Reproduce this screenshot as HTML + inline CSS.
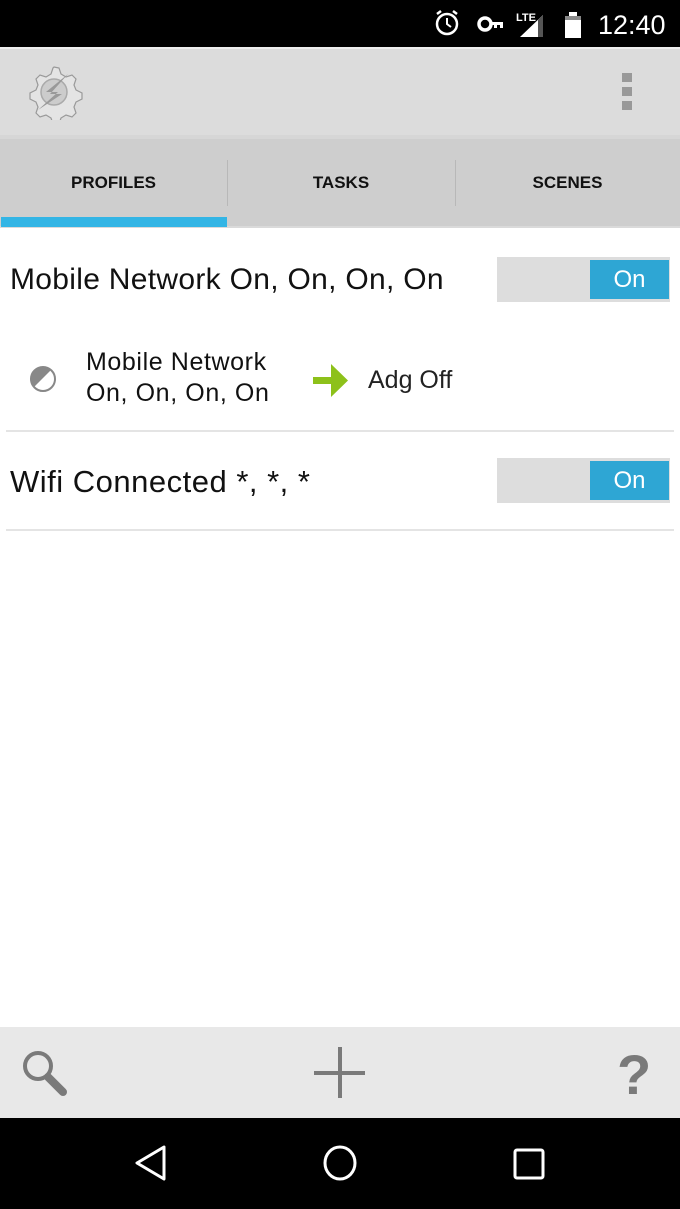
<!DOCTYPE html>
<html><head><meta charset="utf-8"><style>
*{margin:0;padding:0;box-sizing:border-box}
body{width:680px;height:1209px;position:relative;background:#fff;font-family:"Liberation Sans",sans-serif;overflow:hidden}
.a{position:absolute}
.t{white-space:nowrap}
</style></head><body>
<div class="a" style="left:0;top:0;width:680px;height:47px;background:#000"></div>
<svg class="a" style="left:430px;top:6px" width="250" height="36" viewBox="0 0 250 36">
<circle cx="17" cy="18" r="10" fill="none" stroke="#fff" stroke-width="2.5"/>
<path d="M17 12v6l4 3" stroke="#fff" stroke-width="2" fill="none"/>
<path d="M7 8l4-3M27 8l-4-3" stroke="#fff" stroke-width="2.5"/>
<circle cx="55" cy="18" r="6" fill="none" stroke="#fff" stroke-width="3.5"/>
<path d="M60 16h13v6h-3v-3h-3v3h-3v-3h-4z" fill="#fff"/>
<text x="86" y="15" fill="#fff" font-size="11" font-family="Liberation Sans Narrow,Liberation Sans" font-weight="bold">LTE</text>
<path d="M90 31L113 9v22z" fill="#fff"/><path d="M108 14l5-5v22h-5z" fill="#555"/>
<rect x="135" y="10" width="16" height="22" fill="#fff"/><rect x="139" y="6" width="8" height="5" fill="#fff"/><rect x="135" y="10" width="16" height="4" fill="#888"/>
<text x="168" y="28" fill="#fff" font-size="27">12:40</text>
</svg>
<div class="a" style="left:0;top:47px;width:680px;height:88px;background:#dcdcdc;border-top:2px solid #eee"></div>
<svg class="a" style="left:24px;top:64px" width="60" height="56" viewBox="0 0 60 56">
<path d="M30 3l5 1 2 6 5 3 6-2 4 4-2 6 2 5 6 3v6l-6 3-2 5 2 6-4 4-6-2-5 3-2 6h-6l-2-6-5-3-6 2-4-4 2-6-2-5-6-3v-6l6-3 2-5-2-6 4-4 6 2 5-3 2-6z" fill="#e4e4e4" stroke="#999" stroke-width="1.2"/>
<circle cx="30" cy="28" r="13" fill="#ccc" stroke="#aaa" stroke-width="1.5"/>
<path d="M44 10L22 28h12L14 46 38 30H26z" fill="#999"/>
</svg>
<div class="a" style="left:622px;top:73px;width:10px;height:9px;background:#999"></div>
<div class="a" style="left:622px;top:87px;width:10px;height:9px;background:#999"></div>
<div class="a" style="left:622px;top:101px;width:10px;height:9px;background:#999"></div>
<div class="a" style="left:0;top:135px;width:680px;height:93px;background:#cecece;border-top:4px solid #d6d6d6;border-bottom:2px solid #dadada"></div>
<div class="a" style="left:227px;top:160px;width:1px;height:46px;background:#b8b8b8"></div>
<div class="a" style="left:455px;top:160px;width:1px;height:46px;background:#b8b8b8"></div>
<div class="a t" style="left:0;top:173px;width:227px;text-align:center;font-size:17px;font-weight:bold;color:#111">PROFILES</div>
<div class="a t" style="left:227px;top:173px;width:228px;text-align:center;font-size:17px;font-weight:bold;color:#111">TASKS</div>
<div class="a t" style="left:455px;top:173px;width:225px;text-align:center;font-size:17px;font-weight:bold;color:#111">SCENES</div>
<div class="a" style="left:1px;top:217px;width:226px;height:10px;background:#33b5e5"></div>

<div class="a t" style="left:10px;top:263px;font-size:30px;color:#111;letter-spacing:0.3px">Mobile Network On, On, On, On</div>
<div class="a" style="left:497px;top:257px;width:173px;height:45px;background:#dddddd"></div>
<div class="a t" style="left:590px;top:260px;width:79px;height:39px;background:#2ea6d4;color:#fff;font-size:24px;text-align:center;line-height:39px">On</div>

<svg class="a" style="left:29px;top:364px" width="30" height="30" viewBox="0 0 30 30"><circle cx="14" cy="15" r="12" fill="#fff" stroke="#888" stroke-width="2"/><path d="M5 23A12 12 0 0 1 22 6z" fill="#888"/></svg>
<div class="a t" style="left:86px;top:347px;font-size:25px;color:#111;line-height:31px;letter-spacing:0.6px">Mobile Network<br>On, On, On, On</div>
<svg class="a" style="left:313px;top:364px" width="36" height="33" viewBox="0 0 36 33"><path d="M0 13h18V0l17 16.5L18 33V20H0z" fill="#8dc11a"/></svg>
<div class="a t" style="left:368px;top:366px;font-size:25px;color:#222">Adg Off</div>
<div class="a" style="left:6px;top:430px;width:668px;height:2px;background:#e4e4e4"></div>

<div class="a t" style="left:10px;top:464px;font-size:31px;color:#111;letter-spacing:0.5px">Wifi Connected *, *, *</div>
<div class="a" style="left:497px;top:458px;width:173px;height:45px;background:#dddddd"></div>
<div class="a t" style="left:590px;top:461px;width:79px;height:39px;background:#2ea6d4;color:#fff;font-size:24px;text-align:center;line-height:39px">On</div>
<div class="a" style="left:6px;top:529px;width:668px;height:2px;background:#e4e4e4"></div>

<div class="a" style="left:0;top:1027px;width:680px;height:91px;background:#e8e8e8"></div>
<svg class="a" style="left:20px;top:1048px" width="52" height="50" viewBox="0 0 52 50"><circle cx="18" cy="18" r="13" fill="none" stroke="#7a7a7a" stroke-width="4"/><path d="M28 29l15 15" stroke="#7a7a7a" stroke-width="8" stroke-linecap="round"/></svg>
<div class="a" style="left:314px;top:1071px;width:51px;height:4px;background:#7a7a7a"></div>
<div class="a" style="left:338px;top:1047px;width:4px;height:51px;background:#7a7a7a"></div>
<div class="a t" style="left:617px;top:1042px;font-size:56px;font-weight:bold;color:#7a7a7a">?</div>

<div class="a" style="left:0;top:1118px;width:680px;height:91px;background:#000"></div>
<svg class="a" style="left:0;top:1118px" width="680" height="91" viewBox="0 0 680 91"><path d="M164 29L137 45l27 16z" fill="none" stroke="#fff" stroke-width="3" stroke-linejoin="round"/><ellipse cx="340" cy="45" rx="15" ry="16" fill="none" stroke="#fff" stroke-width="3"/><rect x="515" y="32" width="28" height="28" fill="none" stroke="#fff" stroke-width="3" rx="2"/></svg>
</body></html>
